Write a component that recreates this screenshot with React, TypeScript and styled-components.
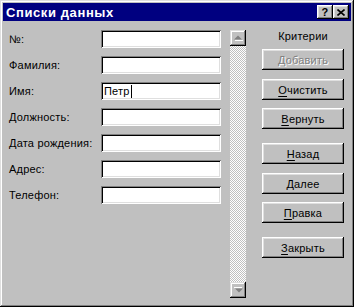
import React from "react";
import styled, { createGlobalStyle } from "styled-components";

const GlobalStyle = createGlobalStyle`
  html, body {
    margin: 0;
    padding: 0;
    background: #c0c0c0;
  }
  body {
    font-family: "Liberation Sans", Arial, sans-serif;
    font-size: 11px;
    letter-spacing: 0.2px;
  }
`;

const Window = styled.div`
  width: 354px;
  height: 307px;
  box-sizing: border-box;
  padding: 3px;
  background: #c0c0c0;
  box-shadow: inset -1px -1px #000, inset 1px 1px #dfdfdf,
    inset -2px -2px #808080, inset 2px 2px #fff;
  display: flex;
  flex-direction: column;
`;

const TitleBar = styled.div`
  height: 18px;
  background: #000080;
  display: flex;
  align-items: center;
  padding: 0 2px 0 3px;
  color: #fff;
`;

const Title = styled.div`
  flex: 1;
  font-weight: bold;
  font-size: 13px;
  letter-spacing: 0.6px;
`;

const CaptionButton = styled.div`
  width: 16px;
  height: 14px;
  box-sizing: border-box;
  background: #c0c0c0;
  box-shadow: inset -1px -1px #000, inset 1px 1px #fff,
    inset -2px -2px #808080, inset 2px 2px #dfdfdf;
  display: flex;
  align-items: center;
  justify-content: center;
  color: #000;
  font-weight: bold;
  font-size: 11px;
  line-height: 1;
`;

const Body = styled.div`
  flex: 1;
  display: flex;
  padding: 9px 0 0 6px;
`;

const Form = styled.div`
  display: grid;
  grid-template-columns: 92px 120px;
  grid-auto-rows: 18px;
  row-gap: 8px;
  align-items: center;
  align-content: start;
`;

const Label = styled.div`
  color: #000;
  white-space: nowrap;
`;

const Field = styled.div`
  height: 18px;
  box-sizing: border-box;
  background: #fff;
  box-shadow: inset 1px 1px #808080, inset -1px -1px #fff,
    inset 2px 2px #000, inset -2px -2px #dfdfdf;
  display: flex;
  align-items: center;
  padding-left: 3px;
  color: #000;
`;

const Caret = styled.span`
  display: inline-block;
  width: 1px;
  height: 13px;
  background: #000;
  margin-left: 1px;
`;

const ScrollBar = styled.div`
  width: 16px;
  height: 268px;
  margin-left: 9px;
  display: flex;
  flex-direction: column;
  background-color: #c0c0c0;
  background-image: repeating-conic-gradient(#fff 0 25%, #c0c0c0 0 50%);
  background-size: 2px 2px;
`;

const ScrollTrack = styled.div`
  flex: 1;
`;

const ArrowButton = styled.div`
  width: 16px;
  height: 16px;
  box-sizing: border-box;
  background: #c0c0c0;
  box-shadow: inset -1px -1px #000, inset 1px 1px #dfdfdf,
    inset -2px -2px #808080, inset 2px 2px #fff;
  display: flex;
  align-items: center;
  justify-content: center;
`;

const Side = styled.div`
  width: 82px;
  margin-left: 16px;
  display: flex;
  flex-direction: column;
`;

const Caption = styled.div`
  height: 13px;
  line-height: 13px;
  text-align: center;
  color: #000;
  margin-bottom: 6px;
`;

const Button = styled.div<{ $gap?: number; $disabled?: boolean }>`
  height: 21px;
  box-sizing: border-box;
  margin-top: ${({ $gap }) => $gap ?? 0}px;
  background: #c0c0c0;
  box-shadow: inset -1px -1px #000, inset 1px 1px #fff,
    inset -2px -2px #808080, inset 2px 2px #dfdfdf;
  display: flex;
  align-items: center;
  justify-content: center;
  color: ${({ $disabled }) => ($disabled ? "#808080" : "#000")};
  text-shadow: ${({ $disabled }) => ($disabled ? "1px 1px #fff" : "none")};

  u {
    text-decoration-thickness: 1px;
    text-underline-offset: 2px;
  }
`;

const fields = [
  { label: "№:", value: "" },
  { label: "Фамилия:", value: "" },
  { label: "Имя:", value: "Петр", focused: true },
  { label: "Должность:", value: "" },
  { label: "Дата рождения:", value: "" },
  { label: "Адрес:", value: "" },
  { label: "Телефон:", value: "" },
];

const buttons = [
  { key: "Д", rest: "обавить", gap: 0, disabled: true },
  { key: "О", rest: "чистить", gap: 9 },
  { key: "В", rest: "ернуть", gap: 8 },
  { key: "Н", rest: "азад", gap: 14 },
  { key: "Д", rest: "алее", gap: 9 },
  { key: "П", rest: "равка", gap: 8 },
  { key: "З", rest: "акрыть", gap: 14 },
];

function Arrow({ down }: { down?: boolean }) {
  return (
    <svg width="9" height="6" viewBox="0 0 9 6" style={{ transform: down ? "rotate(180deg)" : undefined }}>
      <path d="M4 0.5 L8 4.5 L0 4.5 Z" fill="#808080" />
      <path d="M1 5.5 H9" stroke="#fff" strokeWidth="1" />
    </svg>
  );
}

export default function App() {
  return (
    <>
      <GlobalStyle />
      <Window>
        <TitleBar>
          <Title>Списки данных</Title>
          <CaptionButton>?</CaptionButton>
          <CaptionButton>
            <svg width="8" height="7" viewBox="0 0 8 7">
              <path d="M0.5 0.5 L7.5 6.5 M7.5 0.5 L0.5 6.5" stroke="#000" strokeWidth="1.6" />
            </svg>
          </CaptionButton>
        </TitleBar>
        <Body>
          <Form>
            {fields.map((f) => (
              <React.Fragment key={f.label}>
                <Label>{f.label}</Label>
                <Field>
                  {f.value}
                  {f.focused && <Caret />}
                </Field>
              </React.Fragment>
            ))}
          </Form>
          <ScrollBar>
            <ArrowButton>
              <Arrow />
            </ArrowButton>
            <ScrollTrack />
            <ArrowButton>
              <Arrow down />
            </ArrowButton>
          </ScrollBar>
          <Side>
            <Caption>Критерии</Caption>
            {buttons.map((b, i) => (
              <Button key={i} $gap={b.gap} $disabled={b.disabled}>
                {b.disabled ? (
                  b.key + b.rest
                ) : (
                  <span>
                    <u>{b.key}</u>
                    {b.rest}
                  </span>
                )}
              </Button>
            ))}
          </Side>
        </Body>
      </Window>
    </>
  );
}
